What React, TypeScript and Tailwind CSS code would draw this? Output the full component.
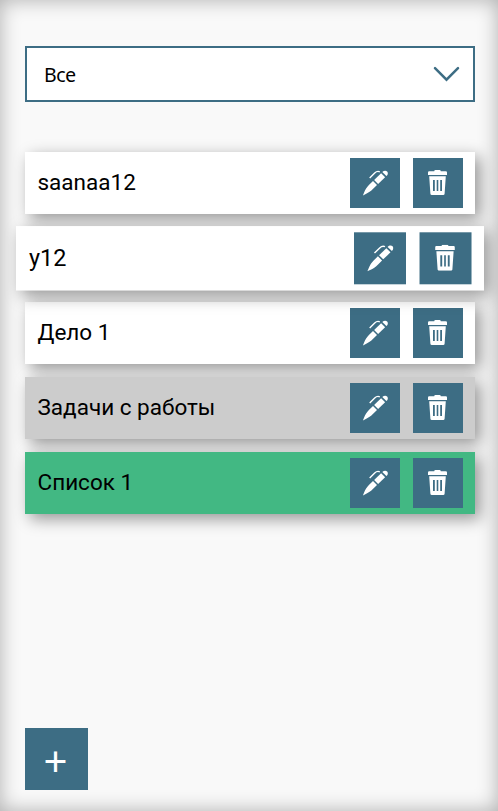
import React from "react";

type Task = { title: string; tone: string; active?: boolean };

const tasks: Task[] = [
  { title: "saanaa12", tone: "bg-white" },
  { title: "y12", tone: "bg-white", active: true },
  { title: "Дело 1", tone: "bg-white" },
  { title: "Задачи с работы", tone: "bg-[#cccccc]" },
  { title: "Список 1", tone: "bg-[#42b883]" },
];

function PenIcon() {
  return (
    <svg className="mb-px" width="26" height="26" viewBox="-0.5 0 26 26" fill="#fff">
      <path d="M0.4 25.5 L1.5 22.8 C2.7 19.6 4.3 17.2 6.4 15.1 L10.5 11.1 L14.5 15.1 L10.4 19.1 C8.1 21.4 5.5 23.2 2.4 24.5 Z" />
      <path d="M11.6 10 L18.6 3.3 L22.6 7.3 L15.6 14 Z" />
      <path d="M19.8 2.1 C21.4 0.4 23.4 0.3 24.6 1.5 C25.7 2.6 25.6 4.4 23.9 6.1 Z" />
      <path d="M7.2 7.9 L12.2 3 C13.8 1.4 15.4 0.9 17.3 1.8" fill="none" stroke="#fff" strokeWidth="1.4" />
    </svg>
  );
}

function TrashIcon() {
  return (
    <svg className="mr-px mb-px" width="19" height="25" viewBox="0 0 19 25" fill="#fff">
      <path d="M6.2 1.2 Q6.3 0 7.4 0 H11.6 Q12.7 0 12.8 1.2 H17.8 Q19 1.2 19 2.4 V4.9 H0 V2.4 Q0 1.2 1.2 1.2 Z" />
      <path
        fillRule="evenodd"
        d="M1.2 6.2 H17.8 L16.6 23.7 Q16.5 25 15.2 25 H3.8 Q2.5 25 2.4 23.7 Z M5 10 V21 H6.8 V10 Z M8.7 10 V21 H10.3 V10 Z M12.2 10 V21 H14 V10 Z"
      />
    </svg>
  );
}

function TaskRow({ title, tone, active }: Task) {
  return (
    <li
      className={`flex h-[62px] items-center gap-[13px] pr-3 pl-[12.5px] shadow-[5px_5px_15px_rgba(0,0,0,0.4)] ${tone} ${
        active ? "z-10 translate-y-[0.3px] scale-[1.04]" : ""
      }`}
    >
      <span className="flex-1 pb-0.5 text-[22.5px] leading-7">{title}</span>
      <button className="flex size-[50px] items-center justify-center bg-[#3d6d84]">
        <PenIcon />
      </button>
      <button className="flex size-[50px] items-center justify-center bg-[#3d6d84]">
        <TrashIcon />
      </button>
    </li>
  );
}

export default function App() {
  return (
    <main className="flex h-[811px] w-[498px] flex-col overflow-hidden bg-[#f9f9f9] pt-[46px] pr-[23px] pb-[21px] pl-[25px] font-['Roboto','Liberation_Sans',sans-serif] text-black shadow-[inset_0_0_20px_rgba(0,0,0,0.3)]">
      <div className="flex h-14 shrink-0 items-center justify-between border-2 border-[#3d6d84] bg-white pr-[13px] pl-[17px]">
        <span className="pt-0.5 font-['Noto_Sans','Open_Sans',sans-serif] text-[19.5px] leading-6 tracking-[-0.4px]">Все</span>
        <svg width="27" height="16" viewBox="0 0 27 16" fill="none" stroke="#3d6d84" strokeWidth="2.5">
          <path d="M2 2.2 L13.5 13.7 L25 2.2" strokeLinecap="round" />
        </svg>
      </div>
      <ul className="mt-[50px] flex flex-col gap-[13px]">
        {tasks.map((task) => (
          <TaskRow key={task.title} {...task} />
        ))}
      </ul>
      <button className="mt-auto flex h-[62px] w-[63px] items-center justify-center bg-[#3d6d84] pt-1 pr-0.5 font-['Noto_Sans','Open_Sans',sans-serif] text-[42px] leading-none text-white">
        +
      </button>
    </main>
  );
}
